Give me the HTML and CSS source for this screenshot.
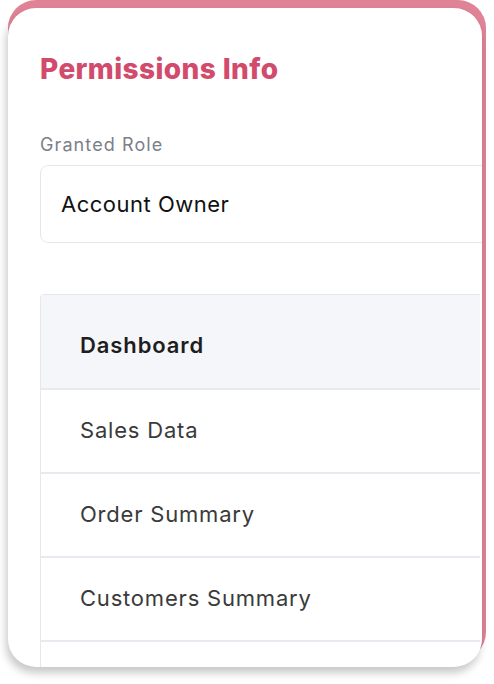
FILE: index.html
```html
<!DOCTYPE html>
<html>
<head>
<meta charset="utf-8">
<link rel="stylesheet" href="styles.css">
</head>
<body>
<div class="stack">
  <div class="card">
    <h1 class="title">Permissions Info</h1>
    <div class="field">
      <label class="label">Granted Role</label>
      <div class="input">Account Owner</div>
    </div>
    <div class="table">
      <div class="row head">Dashboard</div>
      <div class="row">Sales Data</div>
      <div class="row">Order Summary</div>
      <div class="row">Customers Summary</div>
      <div class="row"></div>
    </div>
  </div>
</div>
</body>
</html>
```
FILE: styles.css
```css
html, body {
  margin: 0;
  padding: 0;
  background: #ffffff;
}
body {
  width: 494px;
  height: 684px;
  overflow: hidden;
  font-family: Inter, "Noto Sans", sans-serif;
}
.stack {
  margin-left: 8px;
  width: 478px;
  height: 660px;
  box-sizing: border-box;
  padding: 8px 4px 0 0;
  background: #e08396;
  border-radius: 28px;
}
.card {
  height: 659px;
  box-sizing: border-box;
  background: #ffffff;
  border-radius: 28px;
  box-shadow: -2px 6px 8px rgba(0, 0, 0, 0.22);
  padding: 46px 0 0 32px;
  overflow: hidden;
}
.title {
  margin: 0;
  font-size: 28px;
  font-weight: 800;
  color: #d24a6c;
  line-height: 30px;
  letter-spacing: 0.4px;
}
.field {
  margin-top: 51px;
}
.label {
  display: block;
  font-size: 18px;
  color: #7b8088;
  line-height: 20px;
  letter-spacing: 1.1px;
}
.input {
  margin-top: 10px;
  width: 470px;
  height: 78px;
  box-sizing: border-box;
  border: 1px solid #e6e7ea;
  border-radius: 8px;
  padding-left: 20px;
  display: flex;
  align-items: center;
  font-size: 22px;
  color: #111111;
  letter-spacing: 0.5px;
}
.table {
  margin-top: 51px;
  width: 439px;
  border-left: 1px solid #e6e8ee;
  border-top: 1px solid #e6e8ee;
  border-top-left-radius: 4px;
}
.row {
  height: 82px;
  box-sizing: border-box;
  height: 84px;
  border-bottom: 2px solid #e8eaef;
  display: flex;
  align-items: center;
  padding: 0 0 3px 39px;
  font-size: 22px;
  color: #3a3a3a;
  letter-spacing: 0.8px;
}
.row.head {
  height: 95px;
  padding: 6px 0 0 39px;
  background: #f5f6fa;
  font-weight: 600;
  color: #1e1e1e;
  letter-spacing: 0.9px;
}
```
